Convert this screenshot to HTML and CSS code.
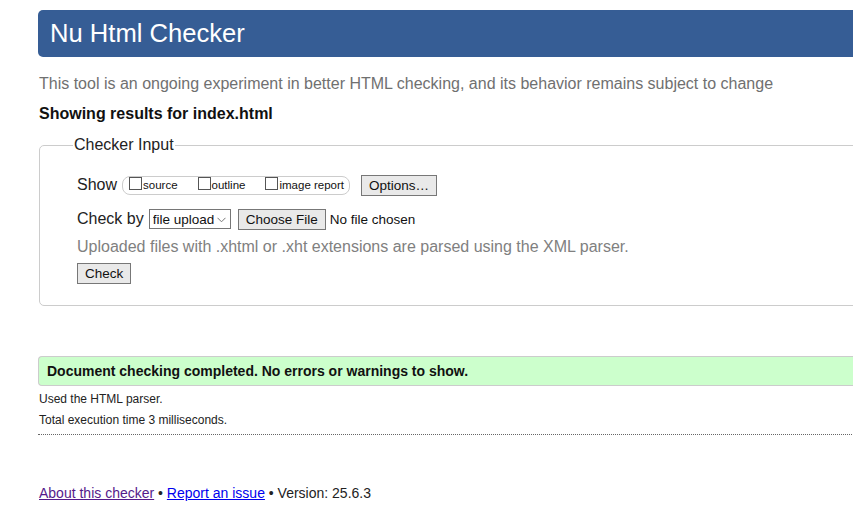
FILE: index.html
```html
<!DOCTYPE html>
<html>
<head>
<meta charset="utf-8">
<link rel="stylesheet" href="styles.css">
</head>
<body>
<div class="page">
  <h1 class="header">Nu Html Checker</h1>
  <p class="intro">This tool is an ongoing experiment in better HTML checking, and its behavior remains subject to change</p>
  <p class="showing">Showing results for index.html</p>
  <fieldset class="input">
    <legend>Checker Input</legend>
    <div class="row show-row">
      <span class="label">Show</span>
      <span class="opts">
        <label><input type="checkbox">source</label>
        <label><input type="checkbox">outline</label>
        <label><input type="checkbox">image report</label>
      </span>
      <button class="btn">Options…</button>
    </div>
    <div class="row by-row">
      <span class="label">Check by</span>
      <span class="selwrap">
        <select class="sel"><option>file upload</option></select>
        <svg class="chev" width="9" height="6" viewBox="0 0 9 6"><path d="M0.5 0.8 L4.5 4.8 L8.5 0.8" fill="none" stroke="#777" stroke-width="1"/></svg>
      </span>
      <button class="btn choose">Choose File</button>
      <span class="nofile">No file chosen</span>
    </div>
    <p class="note">Uploaded files with .xhtml or .xht extensions are parsed using the XML parser.</p>
    <button class="btn check">Check</button>
  </fieldset>
  <p class="success">Document checking completed. No errors or warnings to show.</p>
  <p class="detail">Used the HTML parser.</p>
  <p class="detail">Total execution time 3 milliseconds.</p>
  <hr class="dots">
  <p class="footer"><a href="#" class="visited">About this checker</a> • <a href="#">Report an issue</a> • Version: 25.6.3</p>
</div>
</body>
</html>
```
FILE: styles.css
```css
html, body { margin: 0; padding: 0; overflow: hidden; background: #fff; }
body { font-family: "Liberation Sans", Arial, sans-serif; color: #111; }
.page { margin-left: 38px; width: 880px; padding-top: 10px; }
.header {
  margin: 0; height: 47px; box-sizing: border-box;
  background: #365d95; color: #fff; font-weight: normal;
  font-size: 25.6px; line-height: 47px; padding-left: 12px;
  border-radius: 5px 0 0 5px;
}
.intro { margin: 17px 0 0 1px; font-size: 16px; color: #707070; line-height: 20px; }
.showing { margin: 10px 0 0 1px; font-size: 16px; font-weight: bold; line-height: 20px; color: #111; }
.input {
  margin: 12px 0 0 1px; border: 1px solid #ccc; border-radius: 5px;
  padding: 20px 0 20px 37px; height: 170px; box-sizing: border-box;
}
.input legend { font-size: 16px; padding: 0 1px; margin-left: -4px; color: #222; }
.row { display: flex; align-items: center; }
.label { font-size: 16px; margin-right: 5px; color: #222; }
.show-row { height: 22px; }
.opts {
  display: inline-flex; align-items: center; border: 1px solid #ccc; border-radius: 8px;
  height: 17px; padding: 0 5px 0 6px; font-size: 11.5px; gap: 20px; color: #111;
}
.opts label { display: inline-flex; align-items: center; }
.opts input {
  appearance: none; -webkit-appearance: none; margin: 0 1px 0 0;
  width: 13px; height: 13px; border: 1px solid #555; background: #fff; box-sizing: border-box;
  position: relative; top: -2px;
}
.btn {
  font-family: "Liberation Sans", Arial, sans-serif; font-size: 13.5px; color: #111;
  background: #e9e9e9; border: 1px solid #777; border-radius: 0; padding: 0 7px;
  height: 21px; line-height: 19px;
}
.show-row .btn { margin-left: 11px; }
.by-row { margin-top: 12px; height: 22px; }
.selwrap { position: relative; display: inline-block; height: 20px; }
.sel {
  appearance: none; -webkit-appearance: none;
  font-family: "Liberation Sans", Arial, sans-serif; font-size: 13.5px; height: 20px;
  border: 1px solid #767676; border-radius: 0; background: #fff; color: #111; width: 82px; padding: 0 0 0 3px; margin: 0;
}
.chev { position: absolute; right: 5px; top: 8px; pointer-events: none; }
.choose { margin-left: 7px; }
.nofile { font-size: 13.5px; margin-left: 4px; color: #111; }
.note { margin: 7px 0 0 0; font-size: 16px; color: #808080; line-height: 20px; }
.check { margin-top: 6px; }
.success {
  margin: 50px 0 0 0; background: #ccffcc; border: 1px solid #ccc; border-right: 0;
  border-radius: 4px 0 0 4px; height: 30px; box-sizing: border-box;
  font-weight: bold; font-size: 14px; line-height: 28px; padding-left: 8px; color: #111;
}
.detail { margin: 5px 0 0 1px; font-size: 12px; line-height: 16px; color: #222; }
.detail + .detail { margin-top: 5px; }
.dots { margin: 6px 0 0 0; border: 0; border-top: 1px dotted #666; height: 0; }
.footer { margin: 49px 0 0 1px; font-size: 14px; line-height: 18px; color: #222; }
.footer a { color: #0000ee; }
.footer a.visited { color: #551a8b; }
```
